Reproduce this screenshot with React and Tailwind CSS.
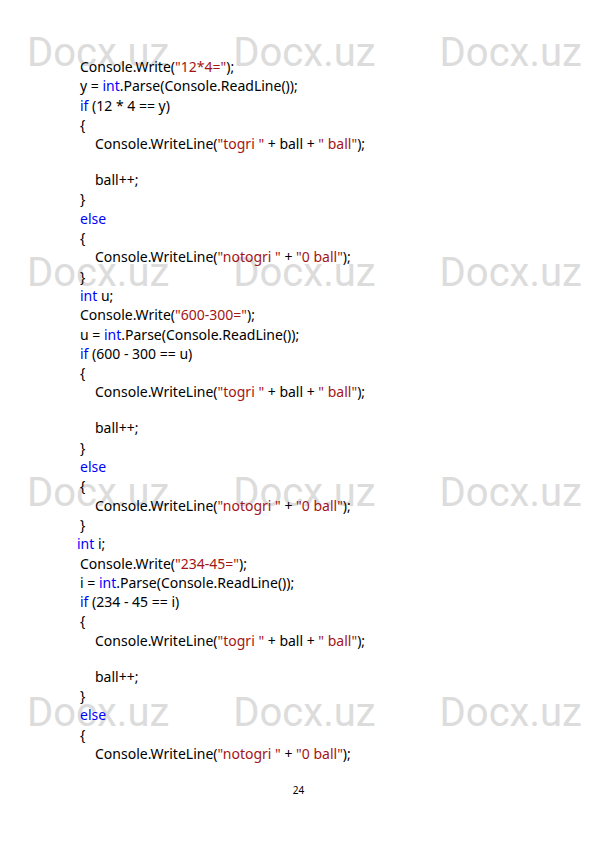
const K = ({ children }) => <span className="text-[#0000ff]">{children}</span>;
const S = ({ children }) => <span className="text-[#a31515]">{children}</span>;

function Line({ indent = 0, children }) {
  const pad = indent === 1 ? 'pl-[15px]' : indent === -1 ? 'pl-[0px] -ml-[3px]' : '';
  return <div className={`h-[19.3px] whitespace-pre ${pad}`}>{children}</div>;
}

const Blank = () => <div className="h-[16.7px]" />;

function Block({ name, expr, cond }) {
  return (
    <>
      <Line>
        Console.Write(<S>"{expr}"</S>);
      </Line>
      <Line>
        {name} = <K>int</K>.Parse(Console.ReadLine());
      </Line>
      <Line>
        <K>if</K> ({cond})
      </Line>
      <Line>{'{'}</Line>
      <Line indent={1}>
        Console.WriteLine(<S>"togri "</S> + ball + <S>" ball"</S>);
      </Line>
      <Blank />
      <Line indent={1}>ball++;</Line>
      <Line>{'}'}</Line>
      <Line>
        <K>else</K>
      </Line>
      <Line>{'{'}</Line>
      <Line indent={1}>
        Console.WriteLine(<S>"notogri "</S> + <S>"0 ball"</S>);
      </Line>
    </>
  );
}

function Watermark() {
  const rows = ['top-[33px]', 'top-[253px]', 'top-[473px]', 'top-[693px]'];
  return (
    <div className="absolute inset-0 pointer-events-none">
      {rows.map((top) => (
        <div key={top} className={`absolute left-[27px] ${top} flex gap-[64px] text-[40px] leading-none text-[#dcdcdc] font-['Roboto',sans-serif]`}>
          <span>Docx.uz</span>
          <span>Docx.uz</span>
          <span>Docx.uz</span>
        </div>
      ))}
    </div>
  );
}

export default function App() {
  return (
    <div className="relative w-[595px] h-[842px] bg-white overflow-hidden">
      <Watermark />
      <div className="relative pt-[57px] pl-[80px] text-[14px] leading-[19.3px] text-black font-['Noto_Sans',sans-serif]">
        <Block name="y" expr="12*4=" cond="12 * 4 == y" />
        <Line>{'}'}</Line>
        <Line>
          <K>int</K> u;
        </Line>
        <Block name="u" expr="600-300=" cond="600 - 300 == u" />
        <Line>{'}'}</Line>
        <Line indent={-1}>
          <K>int</K> i;
        </Line>
        <Block name="i" expr="234-45=" cond="234 - 45 == i" />
      </div>
      <div className="absolute top-[785px] left-0 w-full pl-[2px] text-center text-[10px] leading-none text-black font-['Noto_Sans',sans-serif]">
        24
      </div>
    </div>
  );
}
